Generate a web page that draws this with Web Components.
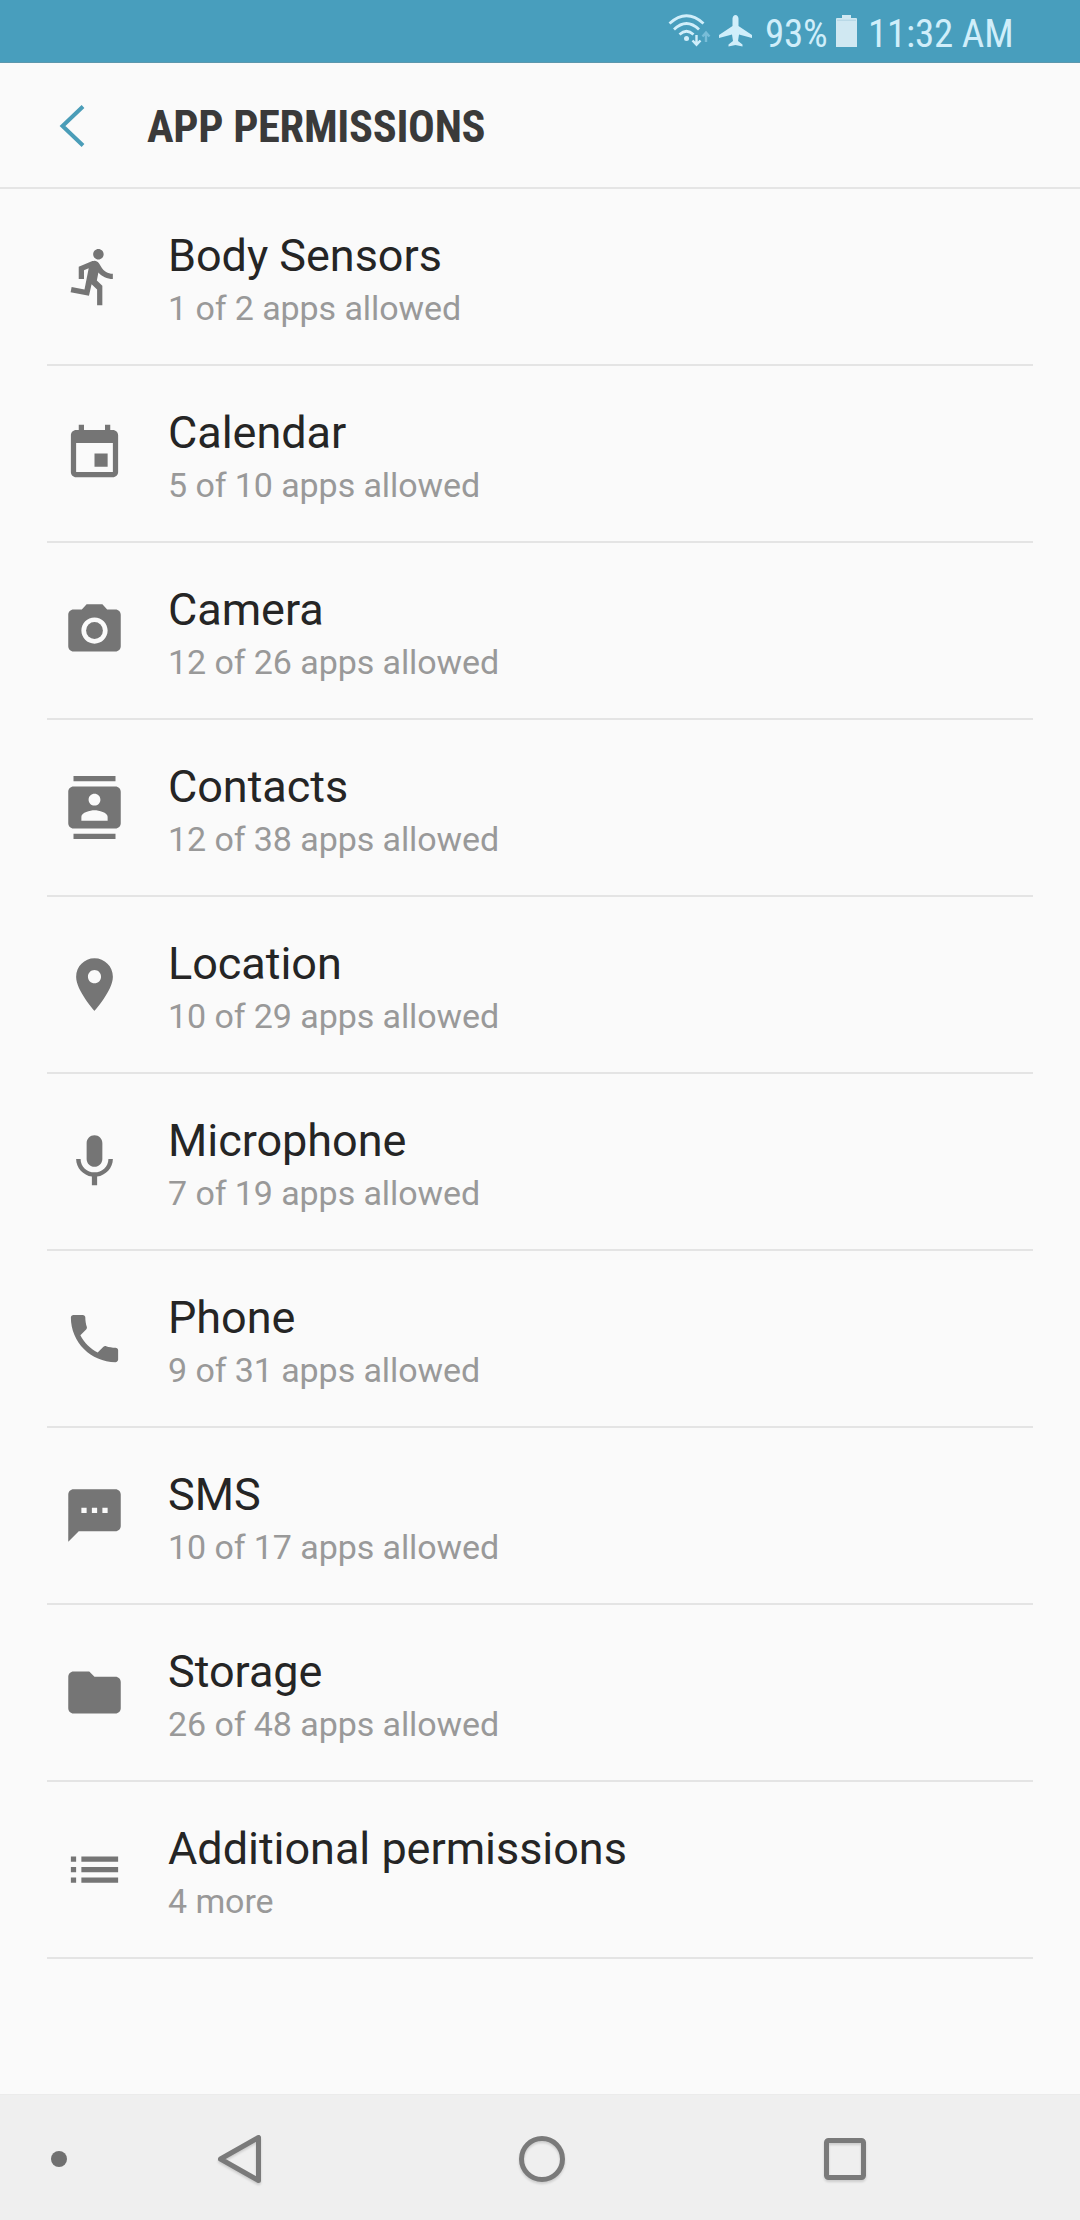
<!DOCTYPE html>
<html lang="en">
<head>
<meta charset="utf-8">
<title>App permissions</title>
<style>
html,body{margin:0;background:#fafafa}
body{font-family:Roboto,"Noto Sans",sans-serif}
</style>
</head>
<body>
<permissions-screen></permissions-screen>
<script>
const define = (name, html) => customElements.define(name, class extends HTMLElement {
  constructor() {
    super();
    const t = document.createElement('template');
    t.innerHTML = html;
    this.attachShadow({ mode: 'open' }).append(t.content.cloneNode(true));
  }
});

const ICONS = {
  run: '<path d="M13.49 5.48c1.1 0 2-.9 2-2s-.9-2-2-2-2 .9-2 2 .9 2 2 2zm-3.6 13.9l1-4.4 2.1 2v6h2v-7.5l-2.1-2 .6-3c1.3 1.5 3.3 2.5 5.5 2.5v-2c-1.9 0-3.5-1-4.3-2.4l-1-1.6c-.4-.6-1-1-1.7-1-.3 0-.5.1-.8.1l-5.2 2.2v4.7h2v-3.4l1.8-.7-1.6 8.1-4.9-1-.4 2 7 1.4z"/>',
  calendar: '<path d="M17 12h-5v5h5v-5zM16 1v2H8V1H6v2H5c-1.11 0-1.99.9-1.99 2L3 19c0 1.1.89 2 2 2h14c1.1 0 2-.9 2-2V5c0-1.1-.9-2-2-2h-1V1h-2zm3 18H5V8h14v11z"/>',
  camera: '<circle cx="12" cy="12" r="3.2"/><path d="M9 2L7.17 4H4c-1.1 0-2 .9-2 2v12c0 1.1.9 2 2 2h16c1.1 0 2-.9 2-2V6c0-1.1-.9-2-2-2h-3.17L15 2H9zm3 15c-2.76 0-5-2.24-5-5s2.24-5 5-5 5 2.24 5 5-2.24 5-5 5z"/>',
  contacts: '<path d="M20 0H4v2h16V0zM4 24h16v-2H4v2zM20 4H4c-1.1 0-2 .9-2 2v12c0 1.1.9 2 2 2h16c1.1 0 2-.9 2-2V6c0-1.1-.9-2-2-2zm-8 2.75c1.24 0 2.25 1.01 2.25 2.25s-1.01 2.25-2.25 2.25S9.75 10.24 9.75 9 10.76 6.75 12 6.75zM17 17H7v-1.5c0-1.67 3.33-2.5 5-2.5s5 .83 5 2.5V17z"/>',
  location: '<path d="M12 2C8.13 2 5 5.13 5 9c0 5.25 7 13 7 13s7-7.75 7-13c0-3.87-3.13-7-7-7zm0 9.5c-1.38 0-2.5-1.12-2.5-2.5s1.12-2.5 2.5-2.5 2.5 1.12 2.5 2.5-1.12 2.5-2.5 2.5z"/>',
  mic: '<path d="M12 14c1.66 0 2.99-1.34 2.99-3L15 5c0-1.66-1.34-3-3-3S9 3.34 9 5v6c0 1.66 1.34 3 3 3zm5.3-3c0 3-2.54 5.1-5.3 5.1S6.7 14 6.7 11H5c0 3.41 2.72 6.23 6 6.72V21h2v-3.28c3.28-.48 6-3.3 6-6.72h-1.7z"/>',
  phone: '<path d="M6.62 10.79c1.44 2.83 3.76 5.14 6.59 6.59l2.2-2.2c.27-.27.67-.36 1.02-.24 1.12.37 2.33.57 3.57.57.55 0 1 .45 1 1V20c0 .55-.45 1-1 1-9.39 0-17-7.61-17-17 0-.55.45-1 1-1h3.5c.55 0 1 .45 1 1 0 1.25.2 2.45.57 3.57.11.35.03.74-.25 1.02l-2.2 2.2z"/>',
  sms: '<path d="M20 2H4c-1.1 0-1.99.9-1.99 2L2 22l4-4h14c1.1 0 2-.9 2-2V4c0-1.1-.9-2-2-2zM9 11H7V9h2v2zm4 0h-2V9h2v2zm4 0h-2V9h2v2z"/>',
  folder: '<path d="M10 4H4c-1.1 0-1.99.9-1.99 2L2 18c0 1.1.9 2 2 2h16c1.1 0 2-.9 2-2V8c0-1.1-.9-2-2-2h-8l-2-2z"/>',
  list: '<path d="M3 13h2v-2H3v2zm0 4h2v-2H3v2zm0-8h2V7H3v2zm4 4h14v-2H7v2zm0 4h14v-2H7v2zM7 7v2h14V7H7z"/>'
};

customElements.define('perm-icon', class extends HTMLElement {
  constructor() {
    super();
    this.attachShadow({ mode: 'open' });
  }
  connectedCallback() {
    this.shadowRoot.innerHTML = `<style>:host{display:block;width:63px;height:63px;flex:none}svg{display:block}</style>
      <svg width="63" height="63" viewBox="0 0 24 24" fill="#757575">${ICONS[this.getAttribute('name')]}</svg>`;
  }
});

define('permission-row', `
<style>
:host{display:flex;align-items:center;box-sizing:border-box;height:177px;margin:0 47px;padding-left:16px;border-bottom:2px solid #e4e4e4}
.text{margin-left:42px;padding-top:4px;white-space:nowrap}
.title{font-size:45px;line-height:53px;letter-spacing:-.04px;color:#252525}
.sub{font-size:34px;line-height:40px;letter-spacing:-.08px;margin-top:6px;color:#999}
</style>
<slot name="icon"></slot>
<div class="text"><div class="title"><slot></slot></div><div class="sub"><slot name="summary"></slot></div></div>`);

define('status-bar', `
<style>
:host{display:flex;justify-content:flex-end;align-items:center;box-sizing:border-box;height:63px;padding-right:68px;background:#489ebd;border-bottom:1px solid #5c97ad;
color:#d0eefa;font-family:"Roboto Condensed",Roboto,sans-serif;font-stretch:75%;font-size:39px;line-height:46px;letter-spacing:-.2px;white-space:nowrap}
svg{display:block;flex:none}
span{padding-top:5px}
.pct{margin-left:13px;width:63px}
.time{margin-left:11px;width:144px}
.bat{margin-left:8px}
</style>
<svg width="44" height="34" viewBox="0 0 44 34" fill="none" stroke="#d0eefa" stroke-width="2.8">
<path d="M1.500 9.500Q18.500-6 35.500 9.500M6 15.500Q18.500 3.500 31 15.500M11.500 20.500Q18.500 14 25.500 20.500"/>
<circle cx="18.500" cy="24.500" r="2.500" fill="#d0eefa" stroke="none"/>
<path d="M28.500 21v9.500M24.500 26.500l4 4.200 4-4.200" stroke-width="2.400"/>
<path d="M38 28V19M34.500 22.500l3.500-4 3.500 4" stroke="#78bdd8" stroke-width="2.400"/></svg>
<svg width="33" height="32" viewBox="0 0 33 32" fill="#d0eefa" style="margin-left:7px"><path d="M13.500 3.500Q14 0 16.500 0T19.500 3.500V11L33 20V23L20 19.500L19 26L23.500 29.500V31.500L16.500 30L9.500 31.500V29.500L14 26L13 19.500L0 23V20L13.500 11Z"/></svg>
<span class="pct">93%</span>
<svg class="bat" width="21" height="32" viewBox="0 0 21 32"><path fill="#d0e8f2" d="M6 0h9v3h5q1 0 1 1v28H0V4q0-1 1-1h5z"/><path d="M1 5.200h19" stroke="#aed3e2"/></svg>
<span class="time">11:32 AM</span>`);

define('title-bar', `
<style>
:host{display:flex;align-items:center;box-sizing:border-box;height:126px;padding:3px 0 1px 59px;border-bottom:2px solid #e5e5e5}
svg{display:block;flex:none}
h1{margin:2px 0 0 62px;font:700 44.500px/52px "Roboto Condensed",Roboto,sans-serif;font-stretch:75%;letter-spacing:-.32px;color:#3a3a3a;white-space:nowrap}
</style>
<svg width="26" height="42" viewBox="0 0 26 42" fill="none" stroke="#4a9db8" stroke-width="4"><path d="M24 1.500L3.500 21L24 40.500"/></svg>
<h1><slot></slot></h1>`);

define('nav-bar', `
<style>
:host{display:flex;align-items:center;box-sizing:border-box;height:126px;padding:2px 0 0 51px;background:#efefef;border-top:1px solid #ebebeb}
svg{display:block;flex:none;overflow:visible}
.s{filter:drop-shadow(0 2px 1px rgba(0,0,0,.14))}
</style>
<svg width="16" height="16"><circle cx="8" cy="8" r="8" fill="#707070"/></svg>
<svg class="s" style="margin-left:151px" width="43" height="48" fill="none" stroke="#7a7a7a" stroke-width="5" stroke-linejoin="round"><path d="M40.500 2.500V45.500L2.500 24Z"/></svg>
<svg class="s" style="margin-left:258px" width="46" height="46" fill="none" stroke="#7a7a7a" stroke-width="5"><circle cx="23" cy="23" r="20.500"/></svg>
<svg class="s" style="margin-left:259px" width="42" height="42" fill="none" stroke="#7a7a7a" stroke-width="5"><rect x="2.500" y="2.500" width="37" height="37" rx="2"/></svg>`);

const rows = [
  ['run', 'Body Sensors', '1 of 2 apps allowed'],
  ['calendar', 'Calendar', '5 of 10 apps allowed'],
  ['camera', 'Camera', '12 of 26 apps allowed'],
  ['contacts', 'Contacts', '12 of 38 apps allowed'],
  ['location', 'Location', '10 of 29 apps allowed'],
  ['mic', 'Microphone', '7 of 19 apps allowed'],
  ['phone', 'Phone', '9 of 31 apps allowed'],
  ['sms', 'SMS', '10 of 17 apps allowed'],
  ['folder', 'Storage', '26 of 48 apps allowed'],
  ['list', 'Additional permissions', '4 more']
];
define('permissions-screen', `
<style>
:host{display:flex;flex-direction:column;width:1080px;height:2220px;background:#fafafa;overflow:hidden}
main{flex:1}
</style>
<status-bar></status-bar>
<title-bar>APP PERMISSIONS</title-bar>
<main>${rows.map(([i, t, s]) => `<permission-row><perm-icon slot="icon" name="${i}"></perm-icon>${t}<span slot="summary">${s}</span></permission-row>`).join('')}</main>
<nav-bar></nav-bar>`);
</script>
</body>
</html>
